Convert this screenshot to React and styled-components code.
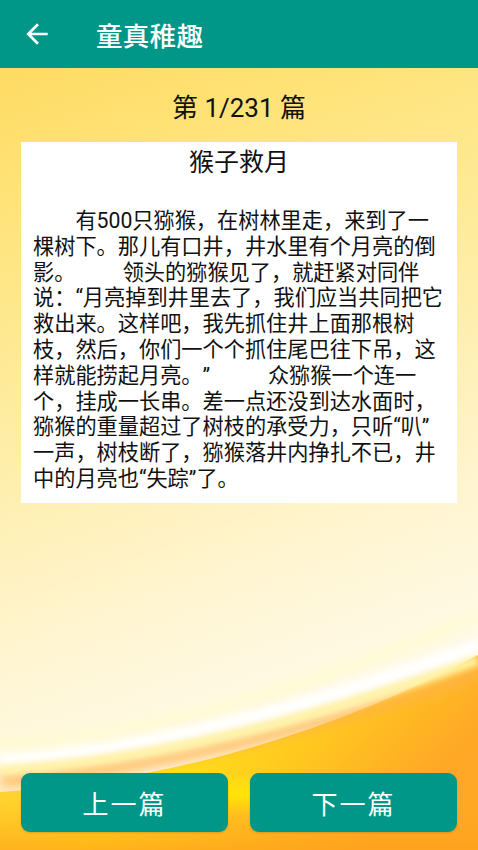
import styled, { createGlobalStyle } from "styled-components";

const GlobalStyle = createGlobalStyle`
  html, body {
    margin: 0;
    padding: 0;
  }
  body {
    font-family: Roboto, "Noto Sans CJK SC", sans-serif;
    text-spacing-trim: space-all;
  }
`;

const Page = styled.div`
  position: relative;
  width: 478px;
  height: 850px;
  overflow: hidden;
  display: flex;
  flex-direction: column;
  background: linear-gradient(
    160deg,
    #fdd658 0%,
    #ffe275 18%,
    #feec9e 40%,
    #fff4cc 62%,
    #fffaea 80%
  );
`;

const Backdrop = styled.svg`
  position: absolute;
  left: 0;
  top: 0;
  width: 478px;
  height: 850px;
  z-index: 0;
`;

const Toolbar = styled.header`
  position: relative;
  z-index: 1;
  height: 68px;
  background: #009688;
  display: flex;
  align-items: center;
  padding-left: 21px;
  gap: 43px;
`;

const BackButton = styled.button`
  width: 32px;
  height: 32px;
  padding: 0;
  border: none;
  background: transparent;
  display: flex;
  align-items: center;
  justify-content: center;
  color: #fff;
`;

const ToolbarTitle = styled.h1`
  margin: 0;
  font-size: 26.6px;
  font-weight: 500;
  color: #fff;
  letter-spacing: 0.2px;
`;

const Main = styled.main`
  position: relative;
  z-index: 1;
  flex: 1;
  display: flex;
  flex-direction: column;
  padding: 0 21px 18px;
`;

const Counter = styled.div`
  height: 74px;
  display: flex;
  align-items: center;
  justify-content: center;
  font-size: 26px;
  color: #111;
`;

const Card = styled.article`
  background: #fff;
  padding: 4px 12px 11px;
`;

const StoryTitle = styled.h2`
  margin: 0;
  text-align: center;
  font-size: 25px;
  font-weight: 400;
  color: #111;
  line-height: 34px;
`;

const StoryBody = styled.p`
  margin: 28px 0 0;
  font-size: 21.2px;
  line-height: 25.8px;
  color: #111;
  white-space: pre;
  text-spacing-trim: space-all;
`;

const ButtonRow = styled.div`
  margin-top: auto;
  display: flex;
  gap: 22px;
`;

const NavButton = styled.button`
  flex: 1;
  height: 59px;
  border: none;
  border-radius: 9px;
  background: #009688;
  color: #fff;
  font-family: Roboto, "Noto Sans CJK SC", sans-serif;
  font-size: 26px;
  letter-spacing: 2px;
  box-shadow: 0 1px 2px rgba(120, 80, 0, 0.25);
`;

const lines = [
  "　　有500只猕猴，在树林里走，来到了一",
  "棵树下。那儿有口井，井水里有个月亮的倒",
  "影。         领头的猕猴见了，就赶紧对同伴",
  "说：“月亮掉到井里去了，我们应当共同把它",
  "救出来。这样吧，我先抓住井上面那根树",
  "枝，然后，你们一个个抓住尾巴往下吊，这",
  "样就能捞起月亮。”           众猕猴一个连一",
  "个，挂成一长串。差一点还没到达水面时，",
  "猕猴的重量超过了树枝的承受力，只听“叭”",
  "一声，树枝断了，猕猴落井内挣扎不已，井",
  "中的月亮也“失踪”了。",
];

function Background() {
  return (
    <Backdrop viewBox="0 0 478 850" aria-hidden="true">
      <defs>
        <linearGradient id="lower" x1="0" y1="0" x2="1" y2="0.4">
          <stop offset="0" stopColor="#ffd64a" />
          <stop offset="0.5" stopColor="#ffe11a" />
          <stop offset="1" stopColor="#ffa726" />
        </linearGradient>
        <radialGradient id="glow" cx="0.5" cy="0.5" r="0.5">
          <stop offset="0" stopColor="#fff200" stopOpacity="0.9" />
          <stop offset="1" stopColor="#fff200" stopOpacity="0" />
        </radialGradient>
        <linearGradient id="bottomShade" x1="0" y1="0" x2="0" y2="1">
          <stop offset="0" stopColor="#ffb020" stopOpacity="0" />
          <stop offset="1" stopColor="#ffa01a" stopOpacity="0.7" />
        </linearGradient>
        <filter id="soft" x="-10%" y="-50%" width="120%" height="200%">
          <feGaussianBlur stdDeviation="3" />
        </filter>
        <filter id="softer" x="-10%" y="-50%" width="120%" height="200%">
          <feGaussianBlur stdDeviation="6" />
        </filter>
      </defs>
      <path d="M0,792 C160,782 330,735 478,655 L478,850 L0,850 Z" fill="url(#lower)" />
      <ellipse cx="250" cy="795" rx="190" ry="22" fill="url(#glow)" />
      <rect x="0" y="780" width="478" height="70" fill="url(#bottomShade)" />
      <path
        d="M0,780 C160,770 330,722 478,672"
        fill="none"
        stroke="#ffb24a"
        strokeWidth="16"
        opacity="0.75"
        filter="url(#softer)"
      />
      <path
        d="M0,770 C160,760 330,714 478,660"
        fill="none"
        stroke="#fff4a8"
        strokeWidth="10"
        filter="url(#soft)"
      />
      <path
        d="M0,758 C160,748 330,700 478,645"
        fill="none"
        stroke="#ffffff"
        strokeWidth="11"
        filter="url(#soft)"
      />
      <path
        d="M0,744 C160,734 330,680 478,615"
        fill="none"
        stroke="#fffbd0"
        strokeWidth="14"
        opacity="0.8"
        filter="url(#softer)"
      />
    </Backdrop>
  );
}

export default function App() {
  return (
    <>
      <GlobalStyle />
      <Page>
        <Background />
        <Toolbar>
          <BackButton aria-label="返回">
            <svg width="32" height="32" viewBox="0 0 24 24">
              <path
                fill="currentColor"
                d="M20 11H7.83l5.59-5.59L12 4l-8 8 8 8 1.41-1.41L7.83 13H20v-2z"
              />
            </svg>
          </BackButton>
          <ToolbarTitle>童真稚趣</ToolbarTitle>
        </Toolbar>
        <Main>
          <Counter>第 1/231 篇</Counter>
          <Card>
            <StoryTitle>猴子救月</StoryTitle>
            <StoryBody>{lines.join("\n")}</StoryBody>
          </Card>
          <ButtonRow>
            <NavButton>上一篇</NavButton>
            <NavButton>下一篇</NavButton>
          </ButtonRow>
        </Main>
      </Page>
    </>
  );
}
